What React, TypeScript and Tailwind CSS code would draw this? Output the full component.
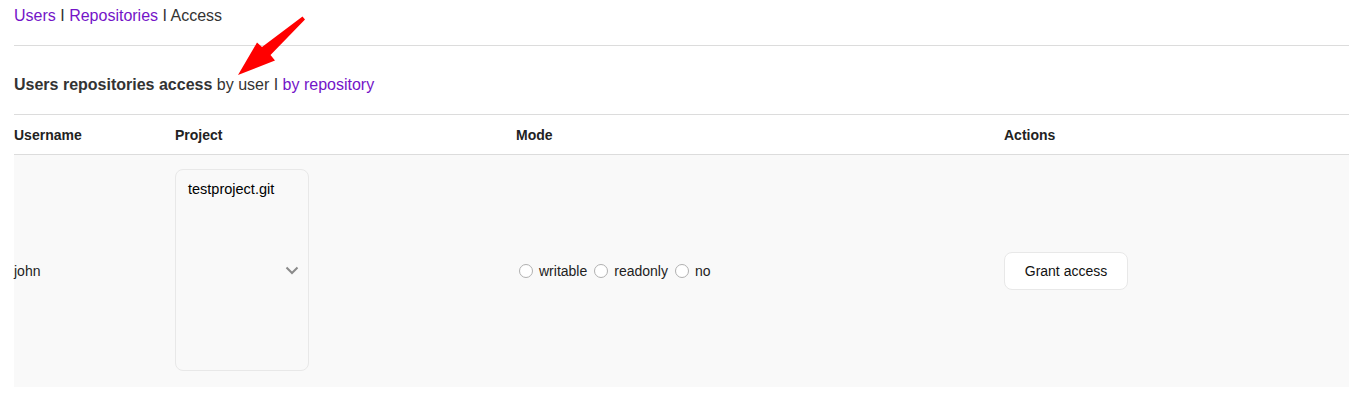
import React from 'react';

const modes = ['writable', 'readonly', 'no'];

function RedArrow() {
  // annotation drawn over the page
  return (
    <svg className="absolute left-0 top-0 pointer-events-none" width="320" height="90" viewBox="0 0 320 90">
      <polygon
        points="302.5,16.5 305,19.5 270.5,55 275,60.5 238,75 257,42.5 262,47"
        fill="#ff0000"
      />
    </svg>
  );
}

export default function App() {
  return (
    <div className="relative min-h-screen bg-white pl-[14px] pr-[21px] font-['Liberation_Sans',Arial,sans-serif] text-[#222]">
      <nav className="h-[46px] border-b border-[#dcdcdc] pt-[7px] text-[16px] leading-[18px]">
        <a className="text-[#7414c8]">Users</a>
        <span className="text-[#333]"> I </span>
        <a className="text-[#7414c8]">Repositories</a>
        <span className="text-[#333]"> I Access</span>
      </nav>

      <h2 className="pt-[30px] pb-[20px] text-[16px] leading-[18px] text-[#333]">
        <span className="font-bold">Users repositories access</span>
        <span> by user I </span>
        <a className="text-[#7414c8]">by repository</a>
      </h2>

      <table className="w-full table-fixed border-collapse text-[14px] leading-[16px]">
        <colgroup>
          <col className="w-[161px]" />
          <col className="w-[341px]" />
          <col className="w-[488px]" />
          <col />
        </colgroup>
        <thead>
          <tr className="h-[40px] border-y border-[#dcdcdc]">
            <th className="p-0 text-left font-bold">Username</th>
            <th className="p-0 text-left font-bold">Project</th>
            <th className="p-0 text-left font-bold">Mode</th>
            <th className="p-0 text-left font-bold">Actions</th>
          </tr>
        </thead>
        <tbody>
          <tr className="bg-[#f9f9f9]">
            <td className="p-0 align-middle">john</td>
            <td className="px-0 pt-[14px] pb-[16px] align-middle">
              <div className="relative h-[202px] w-[134px] rounded-[8px] border border-[#e8e8e8] bg-[#f9f9f9] pl-[12px] pt-[11px] text-[14.5px] text-black">
                testproject.git
                <svg className="absolute right-[9px] top-[96px]" width="14" height="9" viewBox="0 0 14 9">
                  <path d="M1.5 1.5 L7 7 L12.5 1.5" fill="none" stroke="#8a8a8a" strokeWidth="2" />
                </svg>
              </div>
            </td>
            <td className="p-0 align-middle">
              <div className="flex items-center">
                {modes.map((m) => (
                  <label key={m} className="flex items-center">
                    <span className="ml-[3px] mr-[6px] h-[14px] w-[14px] rounded-full border border-[#b0b0b0] bg-white" />
                    <span className="mr-[4px]">{m}</span>
                  </label>
                ))}
              </div>
            </td>
            <td className="p-0 align-middle">
              <button className="h-[38px] w-[124px] rounded-[8px] border border-[#e8e8e8] bg-white text-[14px] text-[#111]">
                Grant access
              </button>
            </td>
          </tr>
        </tbody>
      </table>

      <RedArrow />
    </div>
  );
}
